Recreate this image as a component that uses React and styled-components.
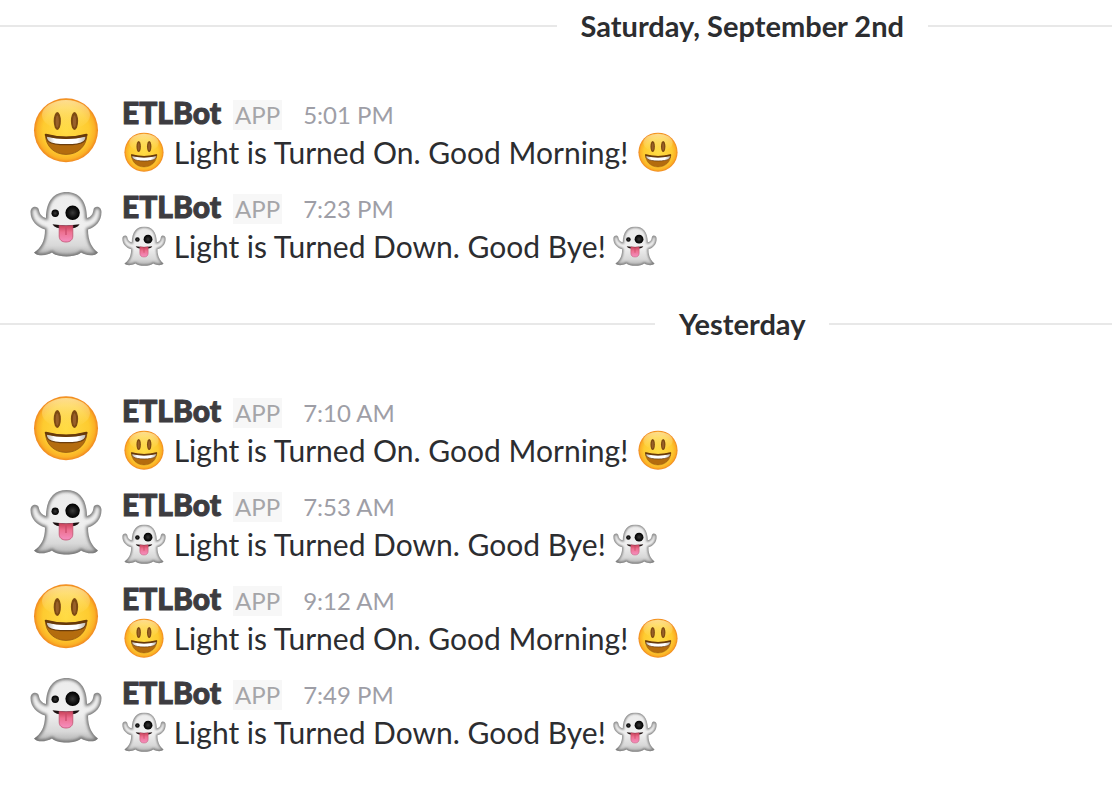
import React, { useId } from "react";
import styled, { createGlobalStyle } from "styled-components";

const GlobalStyle = createGlobalStyle`
  * {
    box-sizing: border-box;
  }
  body {
    margin: 0;
    background-color: #ffffff;
    color: #2c2d30;
    font-family: Lato, "Liberation Sans", sans-serif;
    font-size: 30px;
    line-height: 40px;
  }
`;

const ChatStyled = styled.main`
  overflow: hidden;
`;

const DaySection = styled.section`
  padding-bottom: 18px;
`;

// the message pane is wider than the window, its right part is cut off
const DayDivider = styled.div`
  display: flex;
  align-items: center;
  gap: 24px;
  width: 133.5%;
  margin-bottom: 40px;

  &::before,
  &::after {
    content: "";
    flex: 1;
    height: 2px;
    background-color: #e8e8e8;
  }
`;

const DayTitle = styled.h2`
  margin: 0;
  font-size: 29px;
  font-weight: 700;
  line-height: 52px;
`;

const MessageList = styled.ul`
  margin: 0;
  padding: 0 30px;
  list-style: none;
`;

const MessageItem = styled.li`
  display: flex;
  gap: 20px;
  min-height: 94px;
`;

const Emoji = styled.svg`
  flex-shrink: 0;
  width: ${({ $inline }) => ($inline ? "44px" : "72px")};
  height: ${({ $inline }) => ($inline ? "44px" : "72px")};
  margin: ${({ $inline }) => ($inline ? "-4px 0" : "2px 0 0")};
  vertical-align: ${({ $inline }) => ($inline ? "-6px" : "baseline")};
`;

const MessageHead = styled.div`
  display: flex;
  align-items: baseline;
`;

const Sender = styled.span`
  color: #3d3c40;
  font-weight: 900;
  -webkit-text-stroke: 1px #3d3c40;
`;

const AppBadge = styled.span`
  margin: 0 21px 0 12px;
  padding: 0 2px;
  background-color: #f7f7f7;
  color: #a5a5a8;
  font-size: 24px;
  line-height: 30px;
`;

const Time = styled.time`
  color: #9e9ea6;
  font-size: 24px;
  line-height: 30px;
`;

const MessageText = styled.p`
  margin: 0;
`;

const Smiley = ({ inline }) => {
  const id = useId();
  return (
    <Emoji $inline={inline} viewBox="0 0 72 72" role="img" aria-label="smiley">
      <defs>
        <radialGradient id={`${id}face`} cx="0.5" cy="0.5" r="0.5">
          <stop offset="0" stopColor="#ffdc45" />
          <stop offset="0.72" stopColor="#fecb30" />
          <stop offset="0.9" stopColor="#fbb126" />
          <stop offset="1" stopColor="#f0861f" />
        </radialGradient>
        <linearGradient id={`${id}shine`} x1="0" y1="0" x2="0" y2="1">
          <stop offset="0" stopColor="#fff3c0" stopOpacity="0.7" />
          <stop offset="1" stopColor="#ffe680" stopOpacity="0" />
        </linearGradient>
        <linearGradient id={`${id}teeth`} x1="0" y1="0" x2="1" y2="0">
          <stop offset="0" stopColor="#b9b3aa" />
          <stop offset="0.22" stopColor="#ffffff" />
          <stop offset="0.78" stopColor="#ffffff" />
          <stop offset="1" stopColor="#b9b3aa" />
        </linearGradient>
      </defs>
      <circle cx="36" cy="36.3" r="32" fill={`url(#${id}face)`} />
      <ellipse cx="36" cy="21" rx="24" ry="15" fill={`url(#${id}shine)`} />
      <ellipse cx="27.3" cy="27" rx="3.6" ry="9" fill="#7d4a12" />
      <ellipse cx="44.5" cy="27" rx="3.6" ry="9" fill="#7d4a12" />
      <ellipse cx="27.3" cy="27.5" rx="1.6" ry="6.2" fill="#99602a" />
      <ellipse cx="44.5" cy="27.5" rx="1.6" ry="6.2" fill="#99602a" />
      <path
        d="M15.4 40.6Q36 46 56.9 40.6C56.8 52 48 60.4 36 60.4S15.6 52 15.4 40.6Z"
        fill="#b46c0e"
        stroke="#8f5510"
        strokeWidth="0.8"
      />
      <path
        d="M16 41.8Q36 46.8 56.2 41.8C56.2 44.4 55.6 46.2 54 47.4C48 51.8 24.6 51.8 18.4 47.4C16.8 46.2 16.2 44.4 16 41.8Z"
        fill={`url(#${id}teeth)`}
        stroke="#6b3d0c"
        strokeWidth="1.2"
      />
      <path
        d="M15.8 40.9Q36 46.5 56.5 40.9"
        fill="none"
        stroke="#673909"
        strokeWidth="2.2"
        strokeLinecap="round"
      />
    </Emoji>
  );
};

const Ghost = ({ inline }) => {
  const id = useId();
  return (
    <Emoji $inline={inline} viewBox="0 0 72 72" role="img" aria-label="ghost">
      <defs>
        <linearGradient id={`${id}body`} x1="0" y1="0" x2="0" y2="1">
          <stop offset="0" stopColor="#ececec" />
          <stop offset="0.55" stopColor="#efefef" />
          <stop offset="0.8" stopColor="#d8d8d8" />
          <stop offset="1" stopColor="#a2a2a2" />
        </linearGradient>
        <radialGradient id={`${id}eye`}>
          <stop offset="0" stopColor="#3a3a3a" />
          <stop offset="0.6" stopColor="#141414" />
          <stop offset="1" stopColor="#000000" />
        </radialGradient>
        <linearGradient id={`${id}tongue`} x1="0" y1="0" x2="0" y2="1">
          <stop offset="0" stopColor="#c93f56" />
          <stop offset="0.4" stopColor="#ed7090" />
          <stop offset="1" stopColor="#f58fc0" />
        </linearGradient>
        <clipPath id={`${id}clip`}>
          <path d="M16 30C16 13 24 4 36.5 4S57 13 57 30C61 29 63 26 63.5 21.5C64 17.5 71.5 17.5 71.5 24C71.5 33 66 39 58 41.5C58 53 62 60 68 64.5C65 68.5 57 68 51 64.5C46 69.8 27 69.8 22 64.5C16 68 7 68.5 4 64.5C11 60 15 53 15 41.5C7 39 .5 33 .5 24C.5 17.5 8 17.5 8.8 21.5C9.5 26 12 29 16 30Z" />
        </clipPath>
        <filter id={`${id}soft`} x="-20%" y="-20%" width="140%" height="140%">
          <feGaussianBlur stdDeviation="1.7" />
        </filter>
      </defs>
      <g clipPath={`url(#${id}clip)`}>
        <rect width="72" height="72" fill={`url(#${id}body)`} />
        <path
          d="M16 30C16 13 24 4 36.5 4S57 13 57 30C61 29 63 26 63.5 21.5C64 17.5 71.5 17.5 71.5 24C71.5 33 66 39 58 41.5C58 53 62 60 68 64.5C65 68.5 57 68 51 64.5C46 69.8 27 69.8 22 64.5C16 68 7 68.5 4 64.5C11 60 15 53 15 41.5C7 39 .5 33 .5 24C.5 17.5 8 17.5 8.8 21.5C9.5 26 12 29 16 30Z"
          fill="none"
          stroke="#707070"
          strokeWidth="3.6"
          filter={`url(#${id}soft)`}
        />
      </g>
      <circle cx="25.2" cy="25.3" r="3.7" fill={`url(#${id}eye)`} />
      <circle cx="42.6" cy="24.8" r="7.2" fill={`url(#${id}eye)`} />
      <path
        d="M22.5 36.3Q36 38.6 49.6 36.3Q47.5 40.8 36 40.8T22.5 36.3Z"
        fill="#1c1010"
      />
      <path
        d="M29.2 37.4Q36 38.4 42.8 37.4V48C42.8 52 40 54 36 54S29.2 52 29.2 48Z"
        fill={`url(#${id}tongue)`}
        stroke="#c2506f"
        strokeWidth="0.8"
      />
      <path d="M36 39.5V47" stroke="#c9486a" strokeWidth="1.2" />
    </Emoji>
  );
};

const days = [
  {
    title: "Saturday, September 2nd",
    messages: [
      { time: "5:01 PM", on: true },
      { time: "7:23 PM", on: false },
    ],
  },
  {
    title: "Yesterday",
    messages: [
      { time: "7:10 AM", on: true },
      { time: "7:53 AM", on: false },
      { time: "9:12 AM", on: true },
      { time: "7:49 PM", on: false },
    ],
  },
];

const Message = ({ time, on }) => {
  const Icon = on ? Smiley : Ghost;
  const text = on
    ? "Light is Turned On. Good Morning!"
    : "Light is Turned Down. Good Bye!";

  return (
    <MessageItem>
      <Icon />
      <div>
        <MessageHead>
          <Sender>ETLBot</Sender>
          <AppBadge>APP</AppBadge>
          <Time>{time}</Time>
        </MessageHead>
        <MessageText>
          <Icon inline /> {text} <Icon inline />
        </MessageText>
      </div>
    </MessageItem>
  );
};

const App = () => {
  return (
    <ChatStyled>
      <GlobalStyle />
      {days.map(({ title, messages }) => (
        <DaySection key={title}>
          <DayDivider>
            <DayTitle>{title}</DayTitle>
          </DayDivider>
          <MessageList>
            {messages.map(({ time, on }) => (
              <Message key={time} time={time} on={on} />
            ))}
          </MessageList>
        </DaySection>
      ))}
    </ChatStyled>
  );
};

export default App;
